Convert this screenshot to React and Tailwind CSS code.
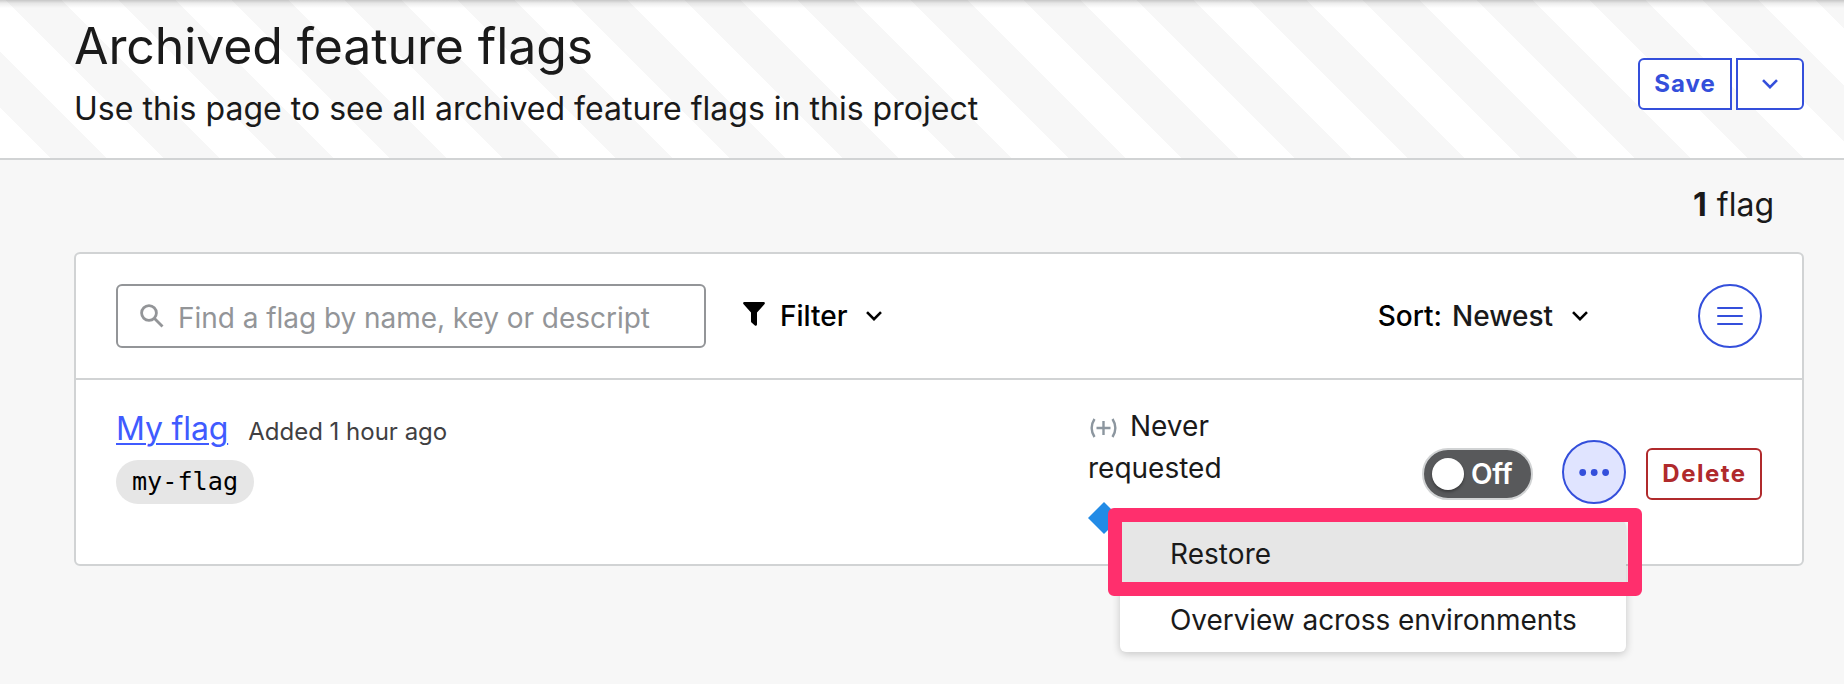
function Chevron({ className }) {
  return (
    <svg className={className} width="16" height="10" viewBox="0 0 16 10" fill="none" stroke="currentColor" strokeWidth="2.6">
      <path d="M1 1.2 8 8.2l7-7" />
    </svg>
  );
}

function PageHeader() {
  return (
    <header className="relative flex h-[160px] justify-between border-b-2 border-[#d1d3d4] bg-[repeating-linear-gradient(45deg,#fff_0px,#fff_35.5px,#f7f7f7_35.5px,#f7f7f7_75.5px,#fff_75.5px,#fff_80px)] pr-10 pl-[74px]">
      <div className="absolute inset-x-0 top-0 h-2 bg-[linear-gradient(to_bottom,rgba(0,0,0,0.2),rgba(0,0,0,0.07)_40%,rgba(0,0,0,0))]" />
      <div className="pt-4">
        <h1 className="text-[50px] leading-[60px] tracking-[-0.1px]">Archived feature flags</h1>
        <p className="mt-[13px] text-[32px] leading-10 tracking-[0.015px]">
          Use this page to see all archived feature flags in this project
        </p>
      </div>
      <div className="mt-[58px] flex h-[52px] gap-1 text-[#344fdb]">
        <button className="w-[94px] rounded-l-md border-2 border-current bg-white text-2xl leading-none font-bold tracking-[1px]">
          Save
        </button>
        <button className="flex w-[68px] items-center justify-center rounded-r-md border-2 border-current bg-white">
          <Chevron />
        </button>
      </div>
    </header>
  );
}

function Toolbar() {
  return (
    <div className="flex h-[126px] items-center border-b-2 border-[#d1d3d4] px-10 text-[28px] leading-8 text-black">
      <div className="flex h-16 w-[590px] items-center rounded-md border-2 border-[#939598] pl-[22px] text-[#939598]">
        <svg width="24" height="24" viewBox="0 0 24 24" fill="none" stroke="currentColor" strokeWidth="2.8">
          <circle cx="9" cy="9" r="7.4" />
          <path d="M14.5 14.5 22.5 22.5" />
        </svg>
        <span className="ml-3.5 pt-1 tracking-[-0.04px]">Find a flag by name, key or descript</span>
      </div>
      <button className="ml-[37px] flex items-center font-medium">
        <svg width="22" height="24" viewBox="0 0 22 24" fill="currentColor" className="-mt-1">
          <path d="M1 0h20q1.4.5.6 2L14 10.5V22.5q-.3 1.6-1.8 1.2L8.5 20.5Q8 20 8 19.300V10.5L.4 2Q-.4.5 1 0Z" />
        </svg>
        <span className="ml-[15px]">Filter</span>
        <Chevron className="ml-[18px]" />
      </button>
      <button className="ml-auto flex items-center font-medium">
        <span>Sort:</span>
        <span className="ml-2.5 text-[#1a1a1a]">Newest</span>
        <Chevron className="ml-[19px]" />
      </button>
      <button className="ml-[110px] flex size-16 flex-col items-center justify-center gap-1.5 rounded-full border-2 border-[#344fdb]">
        <span className="h-0.5 w-[26px] rounded-full bg-[#344fdb]" />
        <span className="h-0.5 w-[26px] rounded-full bg-[#344fdb]" />
        <span className="h-0.5 w-[26px] rounded-full bg-[#344fdb]" />
      </button>
    </div>
  );
}

function FlagMenu() {
  return (
    <div className="absolute top-[80px] right-0 w-[506px] rounded-md bg-white text-[28px] shadow-[0_2px_8px_rgba(0,0,0,0.2)]">
      <div className="h-[66px] rounded-t-md bg-[#e6e6e6] pl-[50px] leading-[68px] tracking-[0.05px]">Restore</div>
      <div className="h-[66px] pl-[50px] leading-[68px] tracking-[-0.06px] whitespace-nowrap">Overview across environments</div>
      <div className="absolute -top-3 -left-3 h-[88px] w-[534px] rounded-md border-14 border-[#ff2f6d]" />
    </div>
  );
}

function FlagRow() {
  return (
    <div className="flex h-[184px] px-10">
      <div className="pt-[31px]">
        <div className="flex h-9 items-baseline leading-9">
          <a className="text-[32px] tracking-[-0.15px] text-[#405bff] underline decoration-2 underline-offset-[3px]">My flag</a>
          <span className="ml-5 text-2xl leading-9 text-[#414042]">Added 1 hour ago</span>
        </div>
        <div className="mt-[13px] flex h-11 w-[138px] items-center justify-center rounded-full bg-[#e6e6e6] font-['DejaVu_Sans_Mono',monospace] text-[25.2px] leading-none text-black">
          my-flag
        </div>
      </div>
      <div className="ml-auto w-[200px] pt-[25px] text-[28px] leading-[42px]">
        <div className="flex items-center">
          <svg width="30" height="20" viewBox="0 0 30 20" fill="none" stroke="#8c969f" strokeWidth="2.4" className="mt-1">
            <path d="M6.5 1Q.8 10 6.5 19M24.5 1Q30.2 10 24.5 19" />
            <path d="M8.5 10h14M15.5 3v14" />
          </svg>
          <span className="ml-3">Never</span>
        </div>
        <div>requested</div>
        <svg width="32" height="32" viewBox="0 0 32 32" className="mt-[13px]">
          <path d="M16 0 32 16 16 32 0 16Z" fill="#228be6" />
        </svg>
      </div>
      <div className="mt-[60px] ml-[134px] flex h-16 items-center self-start">
        <button className="mt-1 flex h-[52px] w-[111px] items-center rounded-full border-2 border-[#d1d3d4] bg-[#58595b] pl-2 text-[28px] font-semibold text-white">
          <span className="size-8 rounded-full bg-white shadow-[0_2px_3px_rgba(0,0,0,0.35)]" />
          <span className="ml-[7px] leading-8 tracking-[-0.2px]">Off</span>
        </button>
        <div className="relative ml-[29px]">
          <button className="flex size-16 items-center justify-center rounded-full border-2 border-[#344fdb] bg-[#e0e4ff]">
            <svg width="30" height="8" viewBox="0 0 30 8" fill="#344fdb">
              <circle cx="3.7" cy="4.5" r="3.4" />
              <circle cx="15.2" cy="4.5" r="3.4" />
              <circle cx="26.600" cy="4.5" r="3.4" />
            </svg>
          </button>
          <FlagMenu />
        </div>
        <button className="mt-1 ml-5 h-[52px] w-[116px] rounded-md border-2 border-[#b02a2c] pl-px text-2xl leading-none font-bold tracking-[1.5px] text-[#b02a2c]">
          Delete
        </button>
      </div>
    </div>
  );
}

export default function App() {
  return (
    <div className="h-[684px] overflow-hidden bg-[#f7f7f7] font-[Inter,sans-serif] text-[#1a1a1a]">
      <PageHeader />
      <main className="pr-10 pl-[74px]">
        <div className="h-[92px] pt-[25px] pr-[30px] text-right text-[32px] leading-10">
          <b className="mr-px font-bold">1</b> flag
        </div>
        <section className="rounded-md border-2 border-[#d1d3d4] bg-white">
          <Toolbar />
          <FlagRow />
        </section>
      </main>
    </div>
  );
}
